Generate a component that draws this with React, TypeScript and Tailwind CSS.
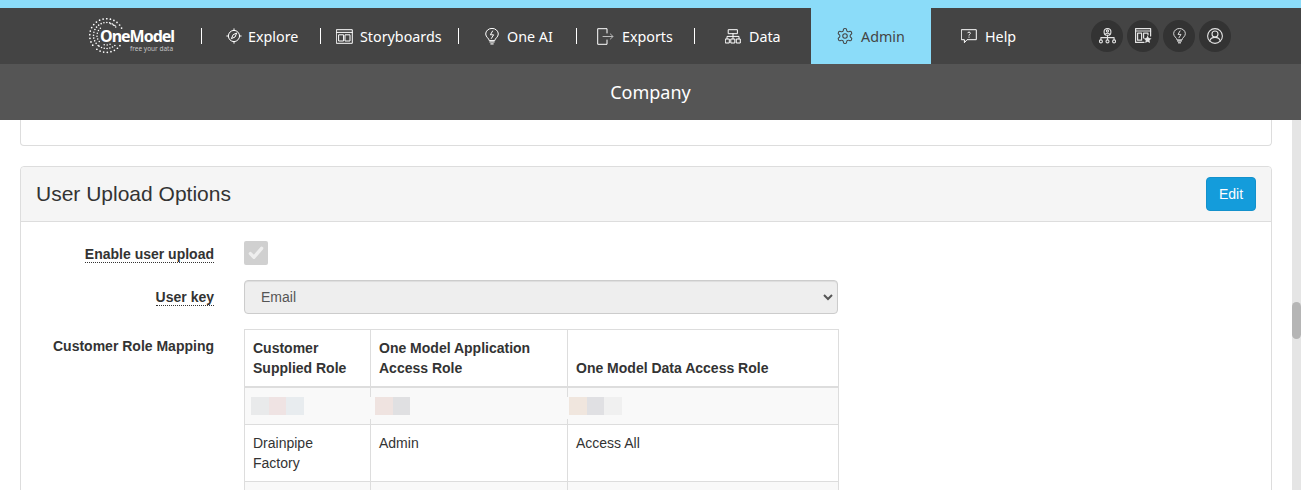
import React from "react";

const nav = "font-['Noto_Sans','Open_Sans',sans-serif]";

function Logo() {
  const dots: [number, number, number][] = [];
  const rings = [
    { r: 16.8, from: -215, to: 125, n: 28, s: 0.85 },
    { r: 13, from: 130, to: 310, n: 15, s: 0.8 },
    { r: 9.5, from: 50, to: 230, n: 11, s: 0.75 },
    { r: 13, from: 50, to: 125, n: 7, s: 0.8 },
    { r: 12.5, from: -70, to: -15, n: 5, s: 0.8 },
  ];
  rings.forEach((g) => {
    for (let i = 0; i < g.n; i++) {
      const a = ((g.from + ((g.to - g.from) * i) / (g.n - 1)) * Math.PI) / 180;
      const x = 17.5 + g.r * Math.cos(a);
      const y = 17.5 + g.r * Math.sin(a);
      if (x > 12 && y > 11 && y < 26) continue;
      dots.push([x, y, g.s]);
    }
  });
  return (
    <div className="relative w-[86px] h-[36px] shrink-0">
      <svg width="36" height="36" viewBox="0 0 36 36" className="block">
        {dots.map((d, i) => (
          <circle key={i} cx={d[0]} cy={d[1]} r={d[2]} fill="#fff" />
        ))}
      </svg>
      <span className={`absolute left-[11px] top-[10px] text-[16px] leading-[16px] font-bold tracking-[-1px] whitespace-nowrap text-white ${nav}`}>OneModel</span>
      <span className={`absolute left-[41px] top-[27px] text-[6.5px] leading-[8px] whitespace-nowrap text-[#c4c4c4] ${nav}`}>free your data</span>
    </div>
  );
}

const S = { fill: "none", stroke: "currentColor", strokeWidth: 1, strokeLinecap: "round" as const, strokeLinejoin: "round" as const };

function IExplore() {
  return (
    <svg width="16" height="16" viewBox="0 0 16 16" {...S}>
      <circle cx="8" cy="8" r="5.6" />
      <path d="M8 .8v1.6M8 13.6v1.6M.8 8h1.6M13.6 8h1.6" />
      <path d="M10.6 5.4 9 9 5.4 10.6 7 7z" />
    </svg>
  );
}
function IBoards() {
  return (
    <svg width="17" height="15" viewBox="0 0 17 15" {...S}>
      <rect x=".7" y=".7" width="15.6" height="13.6" />
      <path d="M.7 3.4h15.6" />
      <rect x="3" y="5.8" width="4.6" height="6.2" />
      <rect x="9.4" y="5.8" width="4.6" height="6.2" />
    </svg>
  );
}
function IBulb({ w = 14, h = 17 }: { w?: number; h?: number }) {
  return (
    <svg width={w} height={h} viewBox="0 0 14 17" {...S}>
      <path d="M4.2 12.2c0-1.8-3.5-3-3.5-6.2a6.3 5.6 0 0 1 12.6 0c0 3.2-3.5 4.4-3.5 6.2z" />
      <path d="M7.6 3 5.4 6.8h3.2L6.4 10.4" />
      <path d="M4.4 13.8h5.2M5.4 15.8h3.2" strokeWidth="1.8" stroke="#bdbdbd" strokeLinecap="butt" />
    </svg>
  );
}
function IExports() {
  return (
    <svg width="17" height="17" viewBox="0 0 17 17" {...S}>
      <path d="M10 5V.7H.7v15.6H10V12" />
      <path d="M6 8.5h10M13.4 6l2.6 2.5-2.6 2.5" stroke="#bbb" />
    </svg>
  );
}
function IData() {
  return (
    <svg width="16" height="15" viewBox="0 0 16 15" {...S}>
      <rect x="3.6" y=".7" width="8.8" height="4" />
      <path d="M8 4.7v5M2 9.7V7.4h12v2.3" />
      <rect x=".7" y="10" width="3.6" height="4" />
      <rect x="6.2" y="10" width="3.6" height="4" />
      <rect x="11.7" y="10" width="3.6" height="4" />
    </svg>
  );
}
function IGear() {
  return (
    <svg width="18" height="18" viewBox="0 0 24 24" fill="none" stroke="currentColor" strokeWidth="1.4" strokeLinecap="round" strokeLinejoin="round">
      <path d="M12.22 2h-.44a2 2 0 0 0-2 2v.18a2 2 0 0 1-1 1.73l-.43.25a2 2 0 0 1-2 0l-.15-.08a2 2 0 0 0-2.73.73l-.22.38a2 2 0 0 0 .73 2.73l.15.1a2 2 0 0 1 1 1.72v.51a2 2 0 0 1-1 1.74l-.15.09a2 2 0 0 0-.73 2.73l.22.38a2 2 0 0 0 2.73.73l.15-.08a2 2 0 0 1 2 0l.43.25a2 2 0 0 1 1 1.73V20a2 2 0 0 0 2 2h.44a2 2 0 0 0 2-2v-.18a2 2 0 0 1 1-1.73l.43-.25a2 2 0 0 1 2 0l.15.08a2 2 0 0 0 2.73-.73l.22-.39a2 2 0 0 0-.73-2.73l-.15-.08a2 2 0 0 1-1-1.74v-.5a2 2 0 0 1 1-1.74l.15-.09a2 2 0 0 0 .73-2.73l-.22-.38a2 2 0 0 0-2.73-.73l-.15.08a2 2 0 0 1-2 0l-.43-.25a2 2 0 0 1-1-1.73V4a2 2 0 0 0-2-2z" />
      <circle cx="12" cy="12" r="3" />
    </svg>
  );
}
function IHelp() {
  return (
    <svg width="16" height="15" viewBox="0 0 16 15" {...S}>
      <path d="M.7.7h14.6v10H6l-2.6 3v-3H.7z" />
      <path d="M6.6 3.8c.3-1 2.8-1 2.8.4 0 1-1.4 1-1.4 2" />
      <path d="M8 8v.3" />
    </svg>
  );
}
function IOrg() {
  return (
    <svg width="17" height="16" viewBox="0 0 17 16" {...S} strokeWidth={1.1}>
      <circle cx="8.5" cy="3.9" r="3.4" />
      <circle cx="8.5" cy="3" r="1.1" />
      <path d="M6.2 6.4c.3-1.5 4.3-1.5 4.6 0" />
      <path d="M1.9 9.6h13.2M8.5 7.4v4M1.9 9.6v1.8M15.1 9.6v1.8" />
      <circle cx="1.9" cy="13.4" r="1.5" />
      <circle cx="8.5" cy="13.4" r="1.5" />
      <circle cx="15.1" cy="13.4" r="1.5" />
    </svg>
  );
}
function IBoardStar() {
  return (
    <svg width="17" height="16" viewBox="0 0 17 16" {...S} strokeWidth={1.2}>
      <path d="M9 14.4H.6V.6h15V8" />
      <path d="M.6 3h15" />
      <rect x="2.6" y="5.2" width="4" height="7" />
      <path d="M8.6 10V5.2h4.4V7" />
      <path d="m12.6 7.6 1.2 2.5 2.7.3-2 1.9.5 2.7-2.4-1.3-2.4 1.3.5-2.7-2-1.9 2.7-.3z" fill="currentColor" stroke="none" />
    </svg>
  );
}
function IUser() {
  return (
    <svg width="16" height="16" viewBox="0 0 16 16" {...S} strokeWidth={1.1}>
      <circle cx="8" cy="8" r="7.4" />
      <circle cx="8" cy="6" r="3" />
      <path d="M2.8 13c.6-2.6 2.6-3.6 5.2-3.6s4.6 1 5.2 3.6" />
    </svg>
  );
}

function Sep() {
  return <div className="w-px h-[16px] bg-white shrink-0" />;
}

function NavItem({ icon, label, className }: { icon: React.ReactNode; label: string; className: string }) {
  return (
    <div className={`flex items-center shrink-0 text-white text-[14.3px] ${nav} ${className}`}>
      <span className="flex justify-center items-center w-[17px] shrink-0">{icon}</span>
      <span className="pt-[2px]">{label}</span>
    </div>
  );
}

function Circle({ children }: { children: React.ReactNode }) {
  return <div className="w-[32px] h-[32px] rounded-full bg-[#333333] flex items-center justify-center text-[#e4e4e4]">{children}</div>;
}

function Blur({ colors }: { colors: string[] }) {
  return (
    <div className="flex h-[18px]">
      {colors.map((c, i) => (
        <div key={i} className="w-[17.7px] h-full" style={{ background: c }} />
      ))}
    </div>
  );
}

function Gap() {
  return <span className="absolute left-[-1px] top-[9px] w-[2px] h-[22px] bg-[#f9f9f9]" />;
}

const th = "border border-[#dddddd] border-b-2 px-2 py-2 align-bottom text-left font-bold leading-[20px]";
const td = "border border-[#dddddd] px-2 py-2 align-top leading-[20px]";
const tdBlur = "relative border border-[#dddddd] h-[37px] align-middle";

export default function App() {
  return (
    <div className="h-[490px] w-[1301px] overflow-hidden bg-white flex flex-col font-['Liberation_Sans',Arial,sans-serif] text-[14px] text-[#333333]">
      <div className="h-[8px] bg-[#8bdcf9] shrink-0" />
      <header className="h-[56px] bg-[#444444] shrink-0 flex items-center pl-[89px]">
        <Logo />
        <div className="ml-[26px]"><Sep /></div>
        <NavItem icon={<IExplore />} label="Explore" className="ml-[23px] w-[95px] gap-[6px]" />
        <Sep />
        <NavItem icon={<IBoards />} label="Storyboards" className="ml-[15px] w-[122px] gap-[7px]" />
        <Sep />
        <NavItem icon={<IBulb />} label="One AI" className="ml-[24px] w-[93px] gap-[7px]" />
        <Sep />
        <NavItem icon={<IExports />} label="Exports" className="ml-[20px] w-[97px] gap-[8px]" />
        <Sep />
        <NavItem icon={<IData />} label="Data" className="ml-[29px] w-[87px] gap-[8px]" />
        <div className="w-[120px] h-full bg-[#8bdcf9] flex items-center shrink-0 pl-[25px] gap-[7px] text-[#444444] text-[14.3px]">
          <IGear />
          <span className={`pt-[2px] ${nav}`}>Admin</span>
        </div>
        <NavItem icon={<IHelp />} label="Help" className="ml-[29px] w-[131px] gap-[8px]" />
        <div className="flex gap-[4px]">
          <Circle><IOrg /></Circle>
          <Circle><IBoardStar /></Circle>
          <Circle><IBulb w={13} h={16} /></Circle>
          <Circle><IUser /></Circle>
        </div>
      </header>
      <div className={`h-[56px] bg-[#555555] shrink-0 flex items-center justify-center text-white text-[18px] ${nav}`}>Company</div>
      <div className="flex flex-1 min-h-0">
        <main className="flex-1 min-w-0 overflow-hidden pl-[20px] pr-[20px]">
          <div className="h-[26px] bg-white border border-t-0 border-[#dddddd] rounded-b-[4px] box-border" />
          <section className="mt-[20px] border border-[#dddddd] rounded-[4px]">
            <div className="h-[55px] bg-[#f5f5f5] border-b border-[#dddddd] rounded-t-[4px] flex items-center justify-between pl-[15px] pr-[15px]">
              <h2 className="text-[21px] font-normal leading-[22px]">User Upload Options</h2>
              <button className="w-[50px] h-[34px] bg-[#149cdb] border border-[#1391cc] rounded-[4px] text-white text-[14px]">Edit</button>
            </div>
            <div className="grid grid-cols-[193px_594px] gap-x-[30px] pt-[19px] pb-[20px] pl-0">
              <div className="flex items-center justify-end h-[24px] pt-[2px] font-bold text-[14px]">
                <span className="border-b border-dotted border-[#333333] leading-[16px]">Enable user upload</span>
              </div>
              <div className="h-[24px]">
                <div className="w-[24px] h-[24px] rounded-[2px] bg-[#d0d0d0] flex items-center justify-center">
                  <svg width="16" height="14" viewBox="0 0 16 14" fill="none" stroke="#eeeeee" strokeWidth="3.4" strokeLinecap="round" strokeLinejoin="round">
                    <path d="M2.4 7.6 6 11.2 13.6 2.4" />
                  </svg>
                </div>
              </div>
              <div className="flex items-center justify-end h-[34px] mt-[15px] font-bold">
                <span className="border-b border-dotted border-[#333333] leading-[16px]">User key</span>
              </div>
              <div className="mt-[15px] h-[34px] bg-[#eeeeee] border border-[#cccccc] rounded-[4px] flex items-center justify-between pl-[16px] pr-[4px] text-[#555555] shadow-[inset_0_1px_1px_rgba(0,0,0,0.075)]">
                <span>Email</span>
                <svg width="10" height="8" viewBox="0 0 10 8" fill="none" stroke="#555555" strokeWidth="2">
                  <path d="M1 2l4 4 4-4" />
                </svg>
              </div>
              <div className="mt-[15px] text-right font-bold leading-[20px] pt-[7px]">Customer Role Mapping</div>
              <table className="mt-[15px] w-[594px] border-collapse table-fixed">
                <colgroup>
                  <col className="w-[126px]" />
                  <col className="w-[197px]" />
                  <col className="w-[271px]" />
                </colgroup>
                <thead>
                  <tr>
                    <th className={th}>Customer Supplied Role</th>
                    <th className={th}>One Model Application Access Role</th>
                    <th className={th}>One Model Data Access Role</th>
                  </tr>
                </thead>
                <tbody>
                  <tr className="bg-[#f9f9f9]">
                    <td className={`${tdBlur} pl-[6px]`}><Blur colors={["#e9eaeb", "#efe3e3", "#e8ecef"]} /></td>
                    <td className={`${tdBlur} pl-[4px]`}><Gap /><Blur colors={["#efe3e0", "#e0e0e2"]} /></td>
                    <td className={`${tdBlur} pl-[1px]`}><Gap /><Blur colors={["#f0e6de", "#e0e0e3", "#f0f0f0"]} /></td>
                  </tr>
                  <tr>
                    <td className={td}>Drainpipe Factory</td>
                    <td className={td}>Admin</td>
                    <td className={td}>Access All</td>
                  </tr>
                  <tr className="bg-[#f9f9f9]">
                    <td className={td}>&nbsp;</td>
                    <td className={td}>&nbsp;</td>
                    <td className={td}>&nbsp;</td>
                  </tr>
                </tbody>
              </table>
            </div>
          </section>
        </main>
        <div className="w-[9px] shrink-0 bg-[#e5e5e5] pt-[182px]">
          <div className="h-[37px] w-full rounded-full bg-[#b5b5b5]" />
        </div>
      </div>
    </div>
  );
}
